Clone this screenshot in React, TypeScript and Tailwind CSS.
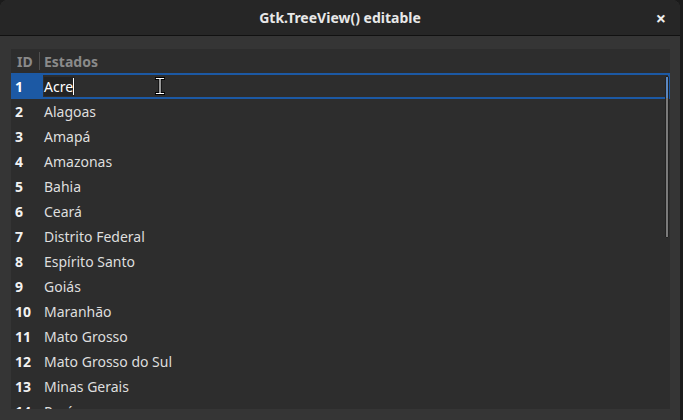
import React from 'react';

const estados = [
  'Acre',
  'Alagoas',
  'Amapá',
  'Amazonas',
  'Bahia',
  'Ceará',
  'Distrito Federal',
  'Espírito Santo',
  'Goiás',
  'Maranhão',
  'Mato Grosso',
  'Mato Grosso do Sul',
  'Minas Gerais',
  'Pará',
];

function IBeam() {
  return (
    <svg width="10" height="18" viewBox="0 0 10 18" className="absolute left-[144px] top-[28px]">
      <path d="M1.5 1.5h7M1.5 16.5h7M5 1.5v15" stroke="#000" strokeWidth="3" strokeLinecap="square" fill="none" />
      <path d="M1.5 1.5h7M1.5 16.5h7M5 1.5v15" stroke="#fff" strokeWidth="1.2" strokeLinecap="square" fill="none" />
    </svg>
  );
}

export default function App() {
  return (
    <div
      className="w-[683px] h-[420px] bg-[#1b1b1b] overflow-hidden"
      style={{ fontFamily: '"Noto Sans", "Open Sans", sans-serif' }}
    >
      <div className="w-[680px] h-[420px] flex flex-col rounded-t-lg overflow-hidden bg-[#353535]">
        {/* Header bar */}
        <div className="h-[36px] shrink-0 bg-[#262626] border-b border-[#111] flex items-center relative">
          <div className="flex-1 text-center text-[14px] font-bold text-[#e8e8e8]">Gtk.TreeView() editable</div>
          <div className="absolute right-[14px] top-[9px] text-[#eee] text-[18px] leading-none font-bold">×</div>
        </div>

        {/* Body */}
        <div className="flex-1 min-h-0 pl-[11px] pr-[10px] pt-[13px] pb-[11px]">
          <div className="relative h-full bg-[#2d2d2d] overflow-hidden">
            {/* Column header */}
            <div className="h-[24px] flex items-center text-[14px] font-bold text-[#8a8a8a]">
              <div className="w-[28px] pl-[6px]">ID</div>
              <div className="w-px h-[18px] bg-[#4f4f4f]" />
              <div className="pl-[4px]">Estados</div>
            </div>

            {estados.map((nome, i) =>
              i === 0 ? (
                <div key={nome} className="h-[26px] flex bg-[#1c59a4] text-[14px]">
                  <div className="w-[32px] pl-[4px] flex items-center font-bold text-white">1</div>
                  <div className="flex-1 my-[2px] mr-[2px] bg-[#2d2d2d] flex items-center">
                    <span className="ml-px pr-px bg-[#232323] text-white leading-[19px] flex items-center">
                      Acre
                      <span className="inline-block w-px h-[17px] bg-white" />
                    </span>
                  </div>
                </div>
              ) : (
                <div key={nome} className="h-[25px] flex items-center text-[14px]">
                  <div className="w-[33px] pl-[4px] font-bold text-[#f2f2f2]">{i + 1}</div>
                  <div className="text-[#dedede]">{nome}</div>
                </div>
              )
            )}

            <IBeam />

            {/* Scrollbar overlay */}
            <div className="absolute right-[1px] top-[27px] w-[4px] h-[162px] rounded-[1px] bg-[#7a7a7a] border border-[#222]">
              <div className="h-[21px] bg-[#5b87c0]" />
            </div>
          </div>
        </div>
      </div>
    </div>
  );
}
